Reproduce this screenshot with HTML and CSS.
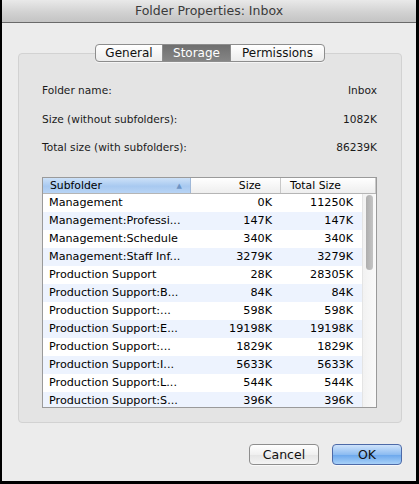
FILE: index.html
```html
<!DOCTYPE html>
<html>
<head>
<meta charset="utf-8">
<link rel="stylesheet" href="styles.css">
</head>
<body>
<div class="window">
  <div class="titlebar">Folder Properties: Inbox</div>
  <div class="content">
    <div class="tabs">
      <div class="tab">General</div>
      <div class="tab active">Storage</div>
      <div class="tab">Permissions</div>
    </div>
    <div class="group">
      <div class="info">
        <div class="info-row"><span>Folder name:</span><span>Inbox</span></div>
        <div class="info-row"><span>Size (without subfolders):</span><span>1082K</span></div>
        <div class="info-row"><span>Total size (with subfolders):</span><span>86239K</span></div>
      </div>
      <div class="table">
        <div class="thead">
          <div class="th th-name">Subfolder<span class="sort">&#9650;</span></div>
          <div class="th th-size">Size</div>
          <div class="th th-total">Total Size</div>
        </div>
        <div class="tbody">
          <div class="rows">
            <div class="row"><span class="c-name">Management</span><span class="c-size">0K</span><span class="c-total">11250K</span></div>
            <div class="row"><span class="c-name">Management:Professi...</span><span class="c-size">147K</span><span class="c-total">147K</span></div>
            <div class="row"><span class="c-name">Management:Schedule</span><span class="c-size">340K</span><span class="c-total">340K</span></div>
            <div class="row"><span class="c-name">Management:Staff Inf...</span><span class="c-size">3279K</span><span class="c-total">3279K</span></div>
            <div class="row"><span class="c-name">Production Support</span><span class="c-size">28K</span><span class="c-total">28305K</span></div>
            <div class="row"><span class="c-name">Production Support:B...</span><span class="c-size">84K</span><span class="c-total">84K</span></div>
            <div class="row"><span class="c-name">Production Support:...</span><span class="c-size">598K</span><span class="c-total">598K</span></div>
            <div class="row"><span class="c-name">Production Support:E...</span><span class="c-size">19198K</span><span class="c-total">19198K</span></div>
            <div class="row"><span class="c-name">Production Support:...</span><span class="c-size">1829K</span><span class="c-total">1829K</span></div>
            <div class="row"><span class="c-name">Production Support:I...</span><span class="c-size">5633K</span><span class="c-total">5633K</span></div>
            <div class="row"><span class="c-name">Production Support:L...</span><span class="c-size">544K</span><span class="c-total">544K</span></div>
            <div class="row"><span class="c-name">Production Support:S...</span><span class="c-size">396K</span><span class="c-total">396K</span></div>
          </div>
          <div class="scrollbar"><div class="thumb"></div></div>
        </div>
      </div>
    </div>
    <div class="buttons">
      <div class="btn">Cancel</div>
      <div class="btn primary">OK</div>
    </div>
  </div>
</div>
</body>
</html>
```

FILE: styles.css
```css
* { box-sizing: border-box; }
html, body { margin: 0; padding: 0; background: #000; }
body { width: 419px; height: 484px; overflow: hidden; }
.window {
  width: 419px;
  height: 484px;
  border-left: 2px solid #000;
  border-right: 3px solid #000;
  border-bottom: 3px solid #000;
  background: #ececec;
  display: flex;
  flex-direction: column;
  font-family: "DejaVu Sans", "Liberation Sans", sans-serif;
  color: #000;
}
.titlebar {
  height: 23px;
  flex: none;
  background: linear-gradient(#e9e9e9, #d0d0d0 60%, #c4c4c4);
  border-bottom: 1px solid #6a6a6a;
  text-align: center;
  font-size: 12.5px;
  line-height: 22px;
  color: #3a3a3a;
}
.content {
  flex: 1;
  display: flex;
  flex-direction: column;
  padding: 21px 14px 0 16px;
}
.tabs {
  align-self: center;
  display: flex;
  height: 18px;
  border: 1px solid #8d8d8d;
  border-radius: 4px;
  overflow: hidden;
  background: linear-gradient(#ffffff, #ececec);
  box-shadow: 0 1px 0 rgba(255,255,255,0.6);
  position: relative;
  z-index: 1;
  margin-bottom: -9px;
}
.tab {
  font-size: 12px;
  line-height: 16px;
  border-left: 1px solid #8d8d8d;
  color: #111;
  text-align: center;
}
.tab:first-child { border-left: none; width: 66px; }
.tab:nth-child(2) { width: 68px; }
.tab:nth-child(3) { width: 94px; }
.tab.active {
  background: linear-gradient(#6f6f6f, #858585);
  color: #fff;
}
.group {
  height: 370px;
  border: 1px solid #d2d2d2;
  border-radius: 4px;
  background: #e4e4e4;
  padding: 29px 24px 0 23px;
  display: flex;
  flex-direction: column;
}
.info { display: flex; flex-direction: column; gap: 14px; font-size: 10.6px; color: #1a1a1a; }
.info-row { display: flex; justify-content: space-between; height: 14.5px; line-height: 14px; }
.table {
  margin-top: 22px;
  border: 1px solid #9a9a9a;
  height: 231px;
  background: #fff;
  display: flex;
  flex-direction: column;
  overflow: hidden;
}
.thead {
  height: 16px;
  flex: none;
  display: flex;
  background: linear-gradient(#ffffff, #eeeeee);
  border-bottom: 1px solid #b5b5b5;
  font-size: 10.8px;
  line-height: 15px;
}
.th { position: relative; }
.th-name {
  width: 148px;
  padding-left: 7px;
  background: linear-gradient(#cde1f8, #a8c9f0 55%, #b8d4f5);
  border-right: 1px solid #9fb8d8;
}
.sort {
  position: absolute;
  right: 8px;
  top: 1px;
  font-size: 7px;
  color: #6d93c4;
}
.th-size { width: 90px; text-align: right; padding-right: 19px; border-right: 1px solid #c8c8c8; }
.th-total { flex: 1; padding-left: 9px; border-right: 1px solid #c8c8c8; }
.tbody { flex: 1; display: flex; overflow: hidden; }
.rows { flex: 1; }
.row {
  height: 18px;
  display: flex;
  font-size: 11.2px;
  line-height: 18px;
  color: #000;
}
.row:nth-child(even) { background: #edf3fe; }
.c-name { width: 148px; padding-left: 6px; white-space: nowrap; overflow: hidden; }
.c-size { width: 90px; text-align: right; padding-right: 9px; }
.c-total { flex: 1; text-align: right; padding-right: 9px; }
.scrollbar {
  width: 14px;
  flex: none;
  background: linear-gradient(90deg, #f2f2f2, #fafafa);
  border-left: 1px solid #e4e4e4;
  padding: 1px 3px 0 3px;
}
.thumb {
  height: 75px;
  border-radius: 4px;
  background: linear-gradient(90deg, #aeaeae, #c4c4c4);
}
.buttons {
  display: flex;
  justify-content: flex-end;
  gap: 13px;
  margin-top: 21px;
}
.btn {
  width: 70px;
  height: 21px;
  border: 1px solid #8e8e8e;
  border-radius: 4px;
  background: linear-gradient(#ffffff, #f0f0f0 50%, #e4e4e4 51%, #f4f4f4);
  font-size: 12.5px;
  line-height: 19px;
  text-align: center;
  color: #111;
  box-shadow: 0 1px 0 rgba(255,255,255,0.7);
}
.btn.primary {
  border-color: #4d6aa8;
  background: linear-gradient(#cfe3fb, #8dbcf1 50%, #6aa6ec 51%, #a7d0f8);
}
```
